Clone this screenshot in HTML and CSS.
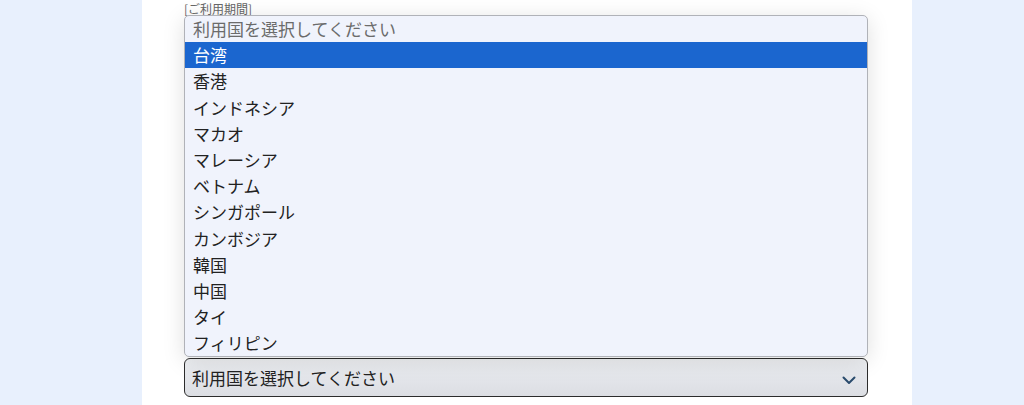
FILE: index.html
```html
<!DOCTYPE html>
<html lang="ja">
<head>
  <meta charset="UTF-8">
  <meta name="viewport" content="width=device-width, initial-scale=1.0">
  <title>ご利用国の選択</title>
  <link rel="stylesheet" href="styles.css">
</head>
<body>
  <main class="page">
    <!-- 利用期間ラベル -->
    <div class="label">[ご利用期間]</div>

    <!-- 開いたドロップダウン -->
    <ul class="listbox">
      <li class="opt placeholder">利用国を選択してください</li>
      <li class="opt selected">台湾</li>
      <li class="opt">香港</li>
      <li class="opt">インドネシア</li>
      <li class="opt">マカオ</li>
      <li class="opt">マレーシア</li>
      <li class="opt">ベトナム</li>
      <li class="opt">シンガポール</li>
      <li class="opt">カンボジア</li>
      <li class="opt">韓国</li>
      <li class="opt">中国</li>
      <li class="opt">タイ</li>
      <li class="opt">フィリピン</li>
    </ul>

    <div class="select">
      <span>利用国を選択してください</span>
      <svg class="chevron" width="14" height="9" viewBox="0 0 14 9">
        <path d="M1.5 1.5 L7 7 L12.5 1.5" fill="none" stroke="#2a4b6d" stroke-width="2" stroke-linecap="round" stroke-linejoin="round"/>
      </svg>
    </div>
  </main>
</body>
</html>
```

FILE: styles.css
```css
html, body {
  margin: 0;
  height: 100%;
  overflow: hidden;
}
body {
  background: #e8f0fd;
  font-family: "Noto Sans CJK JP", "Noto Sans", sans-serif;
  color: #222;
}
.page {
  width: 770px;
  margin-left: 142px;
  height: 100%;
  background: #fff;
  box-sizing: border-box;
  padding: 0 44px 0 42px;
}
.label {
  font-size: 12px;
  line-height: 15px;
  padding-top: 1px;
  color: #666;
}
.listbox {
  list-style: none;
  margin: -1px 0 0 0;
  padding: 0;
  background: #f0f3fc;
  border: 1px solid #b0b2b8;
  border-radius: 5px;
  box-shadow: 0 4px 22px rgba(0, 0, 0, 0.13);
  overflow: hidden;
  position: relative;
}
.opt {
  font-size: 17px;
  line-height: 26.2px;
  height: 26.2px;
  padding-left: 8px;
  white-space: nowrap;
}
.placeholder {
  color: #6b6b6b;
}
.selected {
  background: #1b66cf;
  color: #fff;
}
.select {
  margin-top: 1px;
  height: 39px;
  box-sizing: border-box;
  border: 1.5px solid #2c2c2c;
  border-radius: 6px;
  background: linear-gradient(180deg, #eef0f3 0%, #e2e4e9 60%, #dcdee3 100%);
  display: flex;
  align-items: center;
  justify-content: space-between;
  padding: 0 11px 0 7px;
  font-size: 17px;
  color: #222;
}
.chevron {
  margin-top: 6px;
}
```
